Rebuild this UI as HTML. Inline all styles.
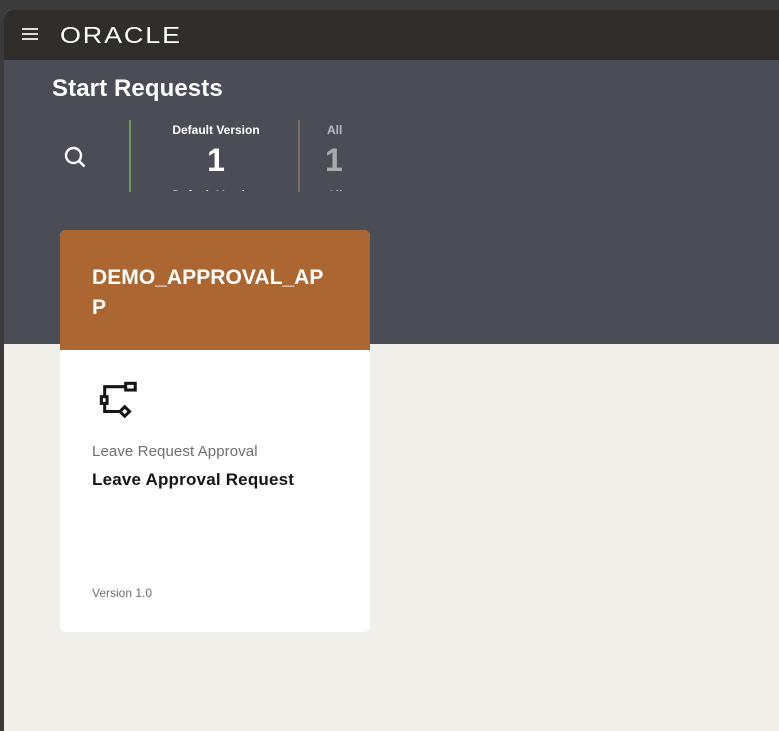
<!DOCTYPE html>
<html><head><style>
*{margin:0;padding:0;box-sizing:border-box}
body{width:779px;height:731px;background:#3b3b3b;font-family:"Liberation Sans",sans-serif;position:relative;overflow:hidden}
#app{position:absolute;left:4px;top:10px;width:775px;height:721px;background:#f1efea;border-top-left-radius:8px;overflow:hidden}
#hdr{position:absolute;left:0;top:0;width:100%;height:50px;background:#312d2a}
#band{position:absolute;left:0;top:50px;width:100%;height:284px;background:#4a4d55}
.t{position:absolute;white-space:nowrap}
#card{position:absolute;left:56px;top:220px;width:310px;height:402px;background:#fff;border-radius:6px;overflow:hidden}
#ch{height:120px;background:#ac6632;position:relative}
.clip{position:absolute;overflow:hidden}
</style></head><body>
<div id="app">
<div id="hdr">
 <div style="position:absolute;left:18px;top:18px;width:16px;height:2px;background:#ddd;box-shadow:0 5px 0 #ddd,0 10px 0 #ddd"></div>
 <div class="t" style="left:56px;top:12px;color:#fff;font-size:23px;letter-spacing:1.6px;transform:scaleX(1.17);transform-origin:left">ORACLE</div>
</div>
<div id="band">
 <div class="t" style="left:48px;top:15px;color:#fff;font-size:24px;font-weight:bold;letter-spacing:0.1px">Start Requests</div>
 <svg style="position:absolute;left:59px;top:85px" width="26" height="26" viewBox="0 0 26 26"><circle cx="10.5" cy="10.5" r="7.5" stroke="#fff" stroke-width="2.4" fill="none"/><path d="M16 16l5.5 5.5" stroke="#fff" stroke-width="2.6"/></svg>
 <div style="position:absolute;left:125px;top:60px;width:2px;height:72px;background:#6aa05a"></div>
 <div class="t" style="left:127px;top:63px;width:170px;text-align:center;color:#fff;font-size:12px;font-weight:bold">Default Version</div>
 <div class="t" style="left:127px;top:82px;width:170px;text-align:center;color:#fff;font-size:32px;font-weight:bold">1</div>
 <div class="clip" style="left:127px;top:128px;width:170px;height:3px"><div class="t" style="left:0;top:0;width:170px;text-align:center;color:#fff;font-size:12px;font-weight:bold">Default Version</div></div>
 <div style="position:absolute;left:294px;top:60px;width:2px;height:72px;background:#7a6e62"></div>
 <div class="t" style="left:323px;top:63px;color:#bbb;font-size:12px;font-weight:bold">All</div>
 <div class="t" style="left:321px;top:82px;color:#aaa;font-size:32px;font-weight:bold">1</div>
 <div class="clip" style="left:323px;top:128px;width:30px;height:3px"><div class="t" style="left:0;top:0;color:#bbb;font-size:12px;font-weight:bold">All</div></div>
</div>
<div id="card">
 <div id="ch"><div class="t" style="left:32px;top:33px;color:#fff;font-size:21px;font-weight:bold;line-height:30px;white-space:normal;width:250px;word-break:break-all;letter-spacing:0.05px">DEMO_APPROVAL_AP P</div></div>
 <svg style="position:absolute;left:38px;top:150px" width="42" height="42" viewBox="0 0 44 44" fill="none" stroke="#161513" stroke-width="3.2"><rect x="29" y="3.5" width="10" height="7"/><rect x="3.5" y="17.5" width="6" height="7"/><path d="M29 7H7V17.5M7 24.5V33H22"/><path d="M28 28l5 5-5 5-5-5z"/></svg>
 <div class="t" style="left:32px;top:213px;color:#6f6f6f;font-size:15px;letter-spacing:0.1px">Leave Request Approval</div>
 <div class="t" style="left:32px;top:240px;color:#161513;font-size:17px;font-weight:bold;letter-spacing:0.2px">Leave Approval Request</div>
 <div class="t" style="left:32px;top:356px;color:#6f6f6f;font-size:12px">Version 1.0</div>
</div>
</div>
</body></html>
